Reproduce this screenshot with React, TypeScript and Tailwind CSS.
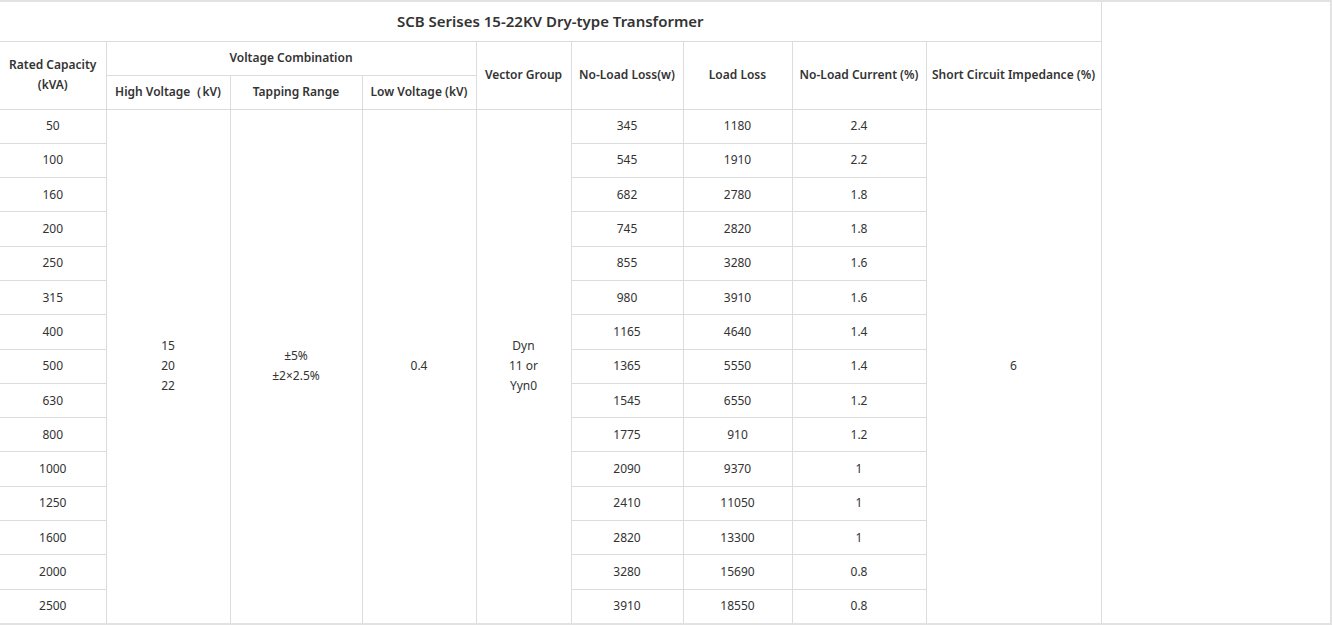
const rows: [string, string, string, string][] = [
  ['50', '345', '1180', '2.4'],
  ['100', '545', '1910', '2.2'],
  ['160', '682', '2780', '1.8'],
  ['200', '745', '2820', '1.8'],
  ['250', '855', '3280', '1.6'],
  ['315', '980', '3910', '1.6'],
  ['400', '1165', '4640', '1.4'],
  ['500', '1365', '5550', '1.4'],
  ['630', '1545', '6550', '1.2'],
  ['800', '1775', '910', '1.2'],
  ['1000', '2090', '9370', '1'],
  ['1250', '2410', '11050', '1'],
  ['1600', '2820', '13300', '1'],
  ['2000', '3280', '15690', '0.8'],
  ['2500', '3910', '18550', '0.8'],
];

const td = 'border border-[#dcdcdc] text-center align-middle p-0';

export default function App() {
  return (
    <div className="w-[1332px] h-[625px] border-t-2 border-r-2 border-b-2 border-[#e2e2e2] bg-white overflow-hidden text-[#333] text-[12px] font-['Open_Sans','Liberation_Sans',sans-serif]">
      <table className="w-[1101px] table-fixed border-collapse">
        <colgroup>
          <col className="w-[106px]" />
          <col className="w-[124px]" />
          <col className="w-[132px]" />
          <col className="w-[114px]" />
          <col className="w-[95px]" />
          <col className="w-[112px]" />
          <col className="w-[109px]" />
          <col className="w-[134px]" />
          <col className="w-[175px]" />
        </colgroup>
        <tbody>
          <tr className="h-[39px]">
            <td colSpan={9} className={`${td} border-t-0 border-l-0 text-[15px] font-semibold`}>
              SCB Serises 15-22KV Dry-type Transformer
            </td>
          </tr>
          <tr className="h-[34px] font-semibold">
            <td rowSpan={2} className={`${td} border-l-0 leading-[20px]`}>Rated Capacity<br />(kVA)</td>
            <td colSpan={3} className={td}>Voltage Combination</td>
            <td rowSpan={2} className={td}>Vector Group</td>
            <td rowSpan={2} className={td}>No-Load Loss(w)</td>
            <td rowSpan={2} className={td}>Load Loss</td>
            <td rowSpan={2} className={td}>No-Load Current (%)</td>
            <td rowSpan={2} className={td}>Short Circuit Impedance (%)</td>
          </tr>
          <tr className="h-[34px] font-semibold">
            <td className={td}>High Voltage（kV)</td>
            <td className={td}>Tapping Range</td>
            <td className={td}>Low Voltage (kV)</td>
          </tr>
          {rows.map((r, i) => (
            <tr key={r[0]} className="h-[34.3px]">
              <td className={`${td} border-l-0`}>{r[0]}</td>
              {i === 0 && (
                <>
                  <td rowSpan={15} className={`${td} leading-[20px]`}>15<br />20<br />22</td>
                  <td rowSpan={15} className={`${td} leading-[20px]`}>±5%<br />±2×2.5%</td>
                  <td rowSpan={15} className={td}>0.4</td>
                  <td rowSpan={15} className={`${td} leading-[20px]`}>Dyn<br />11 or<br />Yyn0</td>
                </>
              )}
              <td className={td}>{r[1]}</td>
              <td className={td}>{r[2]}</td>
              <td className={td}>{r[3]}</td>
              {i === 0 && <td rowSpan={15} className={td}>6</td>}
            </tr>
          ))}
        </tbody>
      </table>
    </div>
  );
}
